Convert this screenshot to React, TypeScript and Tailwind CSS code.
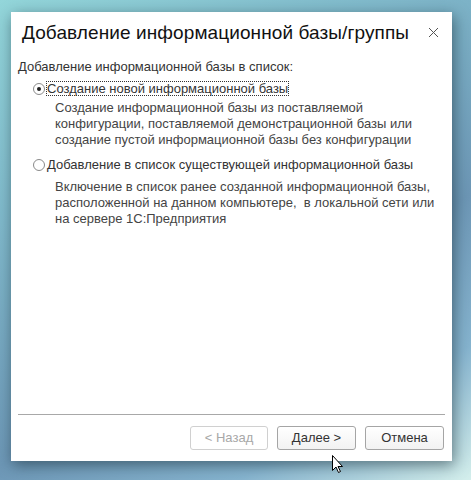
import React from 'react'

function Radio({ checked }: { checked?: boolean }) {
  return (
    <span className="inline-flex items-center justify-center w-[12px] h-[12px] rounded-full border border-[#8a8a8a] bg-white shrink-0">
      {checked && <span className="w-[4px] h-[4px] rounded-full bg-[#222]" />}
    </span>
  )
}

function Btn({ children, disabled }: { children: React.ReactNode; disabled?: boolean }) {
  return (
    <button
      className={
        disabled
          ? 'w-[78px] h-[24px] rounded-[3px] border border-[#d0d0d0] bg-white text-[13px] text-[#a8a8a8]'
          : 'w-[79px] h-[24px] rounded-[3px] border border-[#a5a5a5] bg-gradient-to-b from-white to-[#f2f2f2] text-[13px] text-[#333]'
      }
    >
      {children}
    </button>
  )
}

export default function App() {
  return (
    <div className="w-[471px] h-[480px] overflow-hidden pt-[12px] pl-[11px] bg-[linear-gradient(150deg,#93d6da_0%,#80b9cb_30%,#6d97b6_62%,#86b4cf_82%,#d4efec_100%)] font-['Liberation_Sans',Arial,sans-serif]">
      <div className="relative w-[441px] h-[449px] bg-white flex flex-col shadow-[2px_4px_14px_rgba(20,40,50,0.55)]">
        <div className="flex items-center h-[40px] pl-[11px] pr-[13px]">
          <div className="text-[19px] text-[#111] leading-none tracking-[0.1px]">Добавление информационной базы/группы</div>
          <svg className="ml-auto" width="11" height="11" viewBox="0 0 11 11">
            <path d="M1 1L10 10M10 1L1 10" stroke="#555" strokeWidth="1" />
          </svg>
        </div>

        <div className="pl-[7px] pt-[7px] text-[13px] leading-[16px] text-[#333]">
          <div>Добавление информационной базы в список:</div>

          <div className="flex items-center mt-[6px] ml-[15px] gap-[1px]">
            <Radio checked />
            <span className="px-[1px] outline outline-1 outline-dotted outline-[#333] -outline-offset-1 leading-[15px]">Создание новой информационной базы</span>
          </div>
          <div className="ml-[37px] mt-[4px] text-[#444]">
            Создание информационной базы из поставляемой<br />
            конфигурации, поставляемой демонстрационной базы или<br />
            создание пустой информационной базы без конфигурации
          </div>

          <div className="flex items-center mt-[9px] ml-[15px] gap-[1px]">
            <Radio />
            <span className="px-[1px]">Добавление в список существующей информационной базы</span>
          </div>
          <div className="ml-[37px] mt-[6px] text-[#444]">
            Включение в список ранее созданной информационной базы,<br />
            расположенной на данном компьютере, &nbsp;в локальной сети или<br />
            на сервере 1С:Предприятия
          </div>
        </div>

        <div className="mt-auto mx-[7px] border-t border-[#a8a8a8]" />
        <div className="flex justify-end gap-[9px] pr-[8px] pt-[11px] pb-[11px]">
          <Btn disabled>&lt; Назад</Btn>
          <Btn>Далее &gt;</Btn>
          <Btn>Отмена</Btn>
        </div>

        <svg className="absolute left-[321px] top-[443px]" width="13" height="19" viewBox="0 0 13 19">
          <path d="M0.5 0.5 L0.5 15.5 L4 12 L6.5 17.5 L8.5 16.5 L6 11.5 L10.5 11.5 Z" fill="white" stroke="black" strokeWidth="1" />
        </svg>
      </div>
    </div>
  )
}
